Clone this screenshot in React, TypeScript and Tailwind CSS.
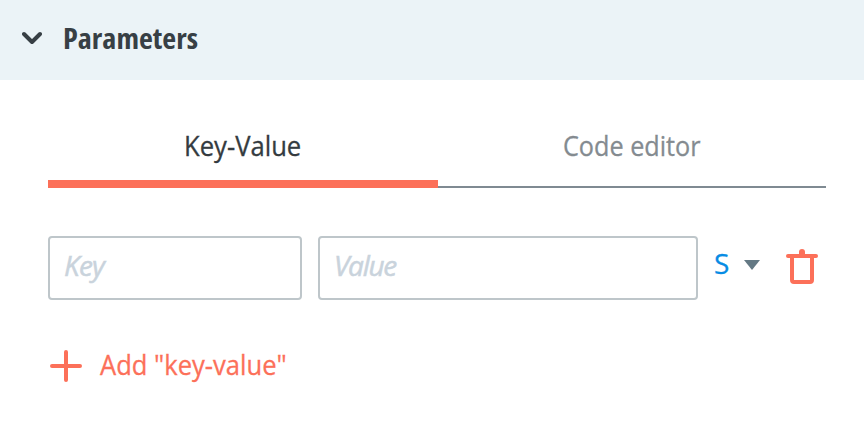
import React from "react";

function Tab({ label, active }: { label: React.ReactNode; active?: boolean }) {
  return (
    <button
      className={
        active
          ? "flex h-[68px] w-[390px] justify-start border-b-8 border-[#fc7059] pl-[135.5px] text-[#343b40]"
          : "flex h-[68px] w-[388px] justify-start border-b-2 border-[#7f8a92] pl-[125px] text-[#848b90]"
      }
    >
      {label}
    </button>
  );
}

export default function App() {
  return (
    <main className="h-[446px] w-[864px] overflow-hidden bg-white font-['Open_Sans','Noto_Sans',sans-serif] text-[28px] leading-[38px]">
      <header className="flex h-20 items-center bg-[#ebf3f7] pb-1 pl-[22px] text-[#373f45]">
        <svg className="h-4 w-5 shrink-0" viewBox="0 0 20 16" fill="none" stroke="currentColor" strokeWidth="4" strokeLinecap="round" strokeLinejoin="round">
          <path d="M2 4L10 12L18 4" />
        </svg>
        <h2 className="ml-[21px] h-[38px] origin-left scale-x-[1.08] font-bold whitespace-nowrap font-stretch-[75%]">Parameters</h2>
      </header>
      <section className="pt-10 pl-12">
        <nav className="flex">
          <Tab active label={<span className="mt-1.5 h-[38px] origin-left scale-x-[0.915] whitespace-nowrap [-webkit-text-stroke:0.3px]">Key-Value</span>} />
          <Tab label={<span className="mt-1.5 h-[38px] origin-left scale-x-[0.9] whitespace-nowrap [-webkit-text-stroke:0.3px]">Code editor</span>} />
        </nav>
        <div className="mt-12 flex h-16 items-center">
          <input placeholder="Key" className="h-16 w-[254px] rounded border-2 border-[#bec6ca] px-[14px] pb-1.5 tracking-[-0.8px] italic outline-none [-webkit-text-stroke:0.5px] placeholder:text-[#c9d3dc]" />
          <input placeholder="Value" className="ml-4 h-16 w-[380px] rounded border-2 border-[#bec6ca] px-[14px] pb-1.5 tracking-[-1.3px] italic outline-none [-webkit-text-stroke:0.5px] placeholder:text-[#c9d3dc]" />
          <button className="ml-4 flex items-center pb-[9px] text-[#078ce4]">
            <span className="-mt-0.5 w-[30px] text-left [-webkit-text-stroke:0.3px]">S</span>
            <svg className="mt-0.5 h-[10px] w-4" viewBox="0 0 16 10" fill="#647984"><path d="M0 0H16L8 10Z" /></svg>
          </button>
          <button aria-label="Delete" className="ml-[26px] pb-1 text-[#fc7059]">
            <svg className="h-[35px] w-8" viewBox="0 0 32 35" fill="none" stroke="currentColor" strokeWidth="4" strokeLinecap="round" strokeLinejoin="round">
              <path d="M2 7H30" />
              <path d="M6 7V31Q6 33 8 33H24Q26 33 26 31V7" />
              <path d="M16 6V3" strokeWidth="6" />
            </svg>
          </button>
        </div>
        <button className="mt-[45px] flex items-center pl-0.5 text-[#fc7059]">
          <svg className="mt-1 h-8 w-8" viewBox="0 0 32 32" stroke="currentColor" strokeWidth="4" strokeLinecap="round"><path d="M2 16H30M16 2V30" /></svg>
          <span className="ml-[18px] origin-left scale-x-[0.913] whitespace-nowrap [-webkit-text-stroke:0.3px]">Add "key-value"</span>
        </button>
      </section>
    </main>
  );
}
